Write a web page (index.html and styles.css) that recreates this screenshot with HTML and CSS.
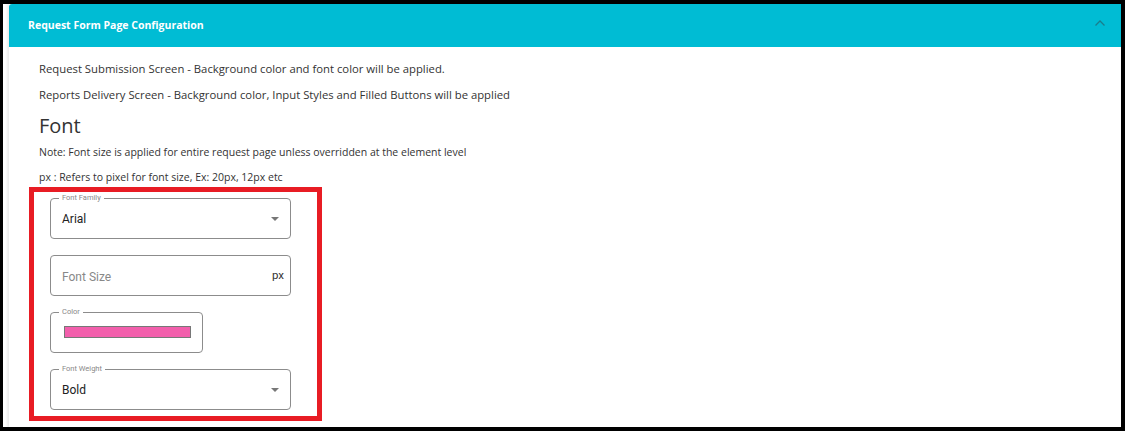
FILE: index.html
```html
<!DOCTYPE html>
<html lang="en">
<head>
    <meta charset="UTF-8" />
    <title>Request Form Page Configuration</title>
    <link rel="stylesheet" href="styles.css">
</head>
<body>
    <div class="page">
        <div class="panel">
            <div class="panel-header">
                <span class="panel-title">Request Form Page Configuration</span>
                <svg class="chevron" width="12" height="8" viewBox="0 0 12 8">
                    <path d="M1.5 6.5 L6 2 L10.5 6.5" fill="none" stroke="#1a7d8c" stroke-width="1.3" />
                </svg>
            </div>

            <div class="panel-body">
                <p class="info">Request Submission Screen - Background color and font color will be applied.</p>
                <p class="info">Reports Delivery Screen - Background color, Input Styles and Filled Buttons will be applied</p>

                <h2>Font</h2>
                <p class="note">Note: Font size is applied for entire request page unless overridden at the element level</p>
                <p class="note px-note">px : Refers to pixel for font size, Ex: 20px, 12px etc</p>

                <div class="highlight">
                    <div class="field wide">
                        <span class="field-label">Font Family</span>
                        <span class="value">Arial</span>
                        <span class="caret"></span>
                    </div>

                    <div class="field wide">
                        <span class="placeholder">Font Size</span>
                        <span class="unit">px</span>
                    </div>

                    <div class="field narrow">
                        <span class="field-label">Color</span>
                        <span class="swatch"></span>
                    </div>

                    <div class="field wide">
                        <span class="field-label">Font Weight</span>
                        <span class="value">Bold</span>
                        <span class="caret"></span>
                    </div>
                </div>
            </div>
        </div>
    </div>
</body>
</html>
```

FILE: styles.css
```css
/* Screenshot frame */
* {
    margin: 0;
    padding: 0;
    box-sizing: border-box;
}

html, body {
    height: 100%;
}

body {
    background: #000;
    padding: 4px 4px 4px 3px;
    font-family: 'Open Sans', 'Liberation Sans', sans-serif;
    color: #333;
    overflow: hidden;
}

.page {
    height: 100%;
    background: #fff;
    padding-left: 6px;
}

.panel {
    height: 100%;
    background: #fff;
    box-shadow: -2px 0 2px rgba(0, 0, 0, 0.08);
}

/* Teal accordion header */
.panel-header {
    height: 43px;
    background: #00bcd4;
    border-top-left-radius: 3px;
    display: flex;
    align-items: center;
    justify-content: space-between;
    padding: 0 15px 2px 19px;
}

.panel-title {
    color: #fff;
    font-size: 10.5px;
    font-weight: 700;
}

.chevron {
    margin-top: -3px;
}

.panel-body {
    padding: 14px 30px 0;
}

.info {
    font-size: 11.3px;
    line-height: 16px;
    margin-bottom: 10px;
}

h2 {
    font-size: 20px;
    font-weight: 400;
    line-height: 26px;
    margin-top: 2px;
    margin-bottom: 5px;
}

.note {
    font-size: 10.5px;
    line-height: 16px;
    margin-bottom: 9px;
}

.px-note {
    margin-bottom: 2px;
}

/* Red annotation box around the inputs */
.highlight {
    width: 293px;
    margin-left: -10px;
    border: 5px solid #e81c24;
    padding: 6px 16px 6px;
    display: flex;
    flex-direction: column;
    gap: 16px;
}

.field {
    position: relative;
    height: 41px;
    border: 1px solid #8c8c8c;
    border-radius: 4px;
    display: flex;
    align-items: center;
    padding: 0 11px;
    font-family: Roboto, 'Liberation Sans', sans-serif;
}

.field.wide {
    width: 241px;
}

.field.narrow {
    width: 153px;
}

.field-label {
    position: absolute;
    top: -6px;
    left: 8px;
    padding: 0 3px;
    background: #fff;
    font-size: 7.5px;
    line-height: 10px;
    color: #888;
}

.value {
    font-size: 12px;
    color: #222;
}

.caret {
    margin-left: auto;
    margin-right: 0;
    width: 0;
    height: 0;
    border-left: 4px solid transparent;
    border-right: 4px solid transparent;
    border-top: 4px solid #777;
}

.placeholder {
    margin-top: 3px;
    font-size: 12px;
    color: #888;
}

.unit {
    margin-left: auto;
    margin-top: -1px;
    margin-right: -5px;
    font-size: 11.5px;
    color: #333;
}

.swatch {
    width: 127px;
    height: 12px;
    margin-left: 2px;
    margin-top: -1px;
    background: #f25fac;
    border: 1px solid #777;
}
```
